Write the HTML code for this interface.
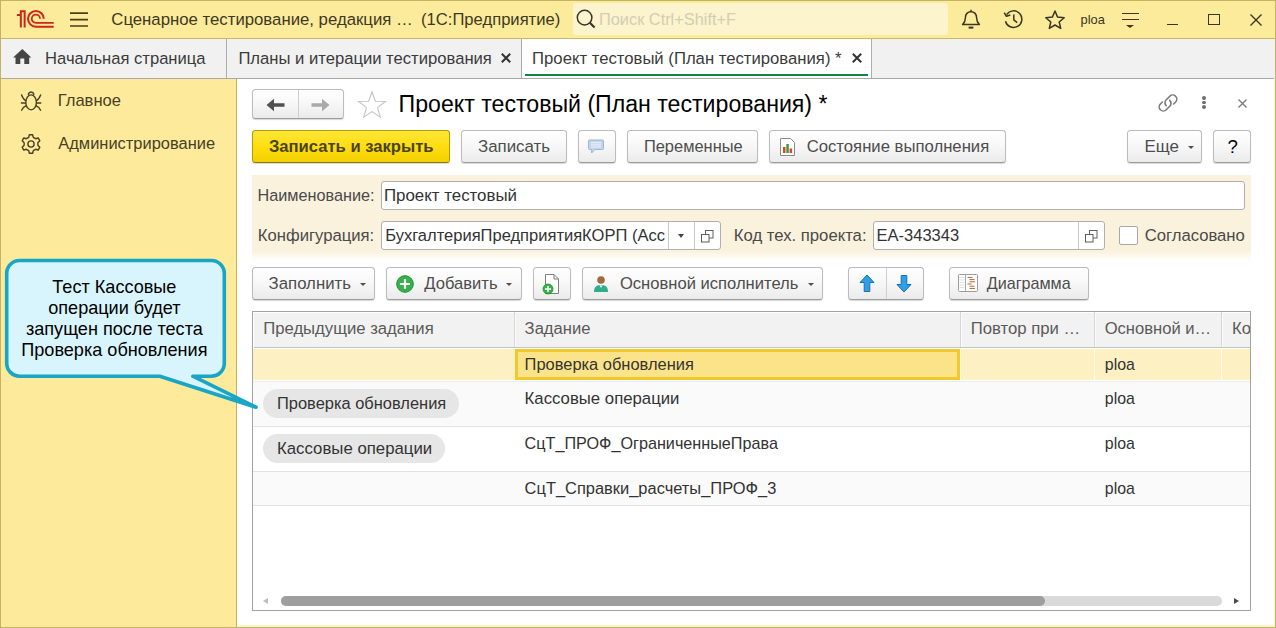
<!DOCTYPE html>
<html><head><meta charset="utf-8">
<style>
*{box-sizing:border-box;margin:0;padding:0}
html,body{width:1276px;height:628px;overflow:hidden;background:#fff}
body{font-family:"Liberation Sans",sans-serif;font-size:16px;color:#3b3b3b;position:relative}
.abs{position:absolute}
#titlebar{left:0;top:0;width:1276px;height:39px;background:#fbeb9b;border-bottom:1px solid #c9b964}
#tabbar{left:0;top:39px;width:1276px;height:40px;background:#f1f1f1;border-bottom:1px solid #a8a8a8}
#sidebar{left:0;top:79px;width:237px;height:549px;background:#fdeb9b;border-right:1px solid #c2b060}
.t{position:absolute;white-space:nowrap;line-height:20px}
.btn{position:absolute;height:33px;border:1px solid #bcbcbc;border-bottom-color:#9c9c9c;border-radius:3.500px;background:linear-gradient(#ffffff,#f7f7f7 50%,#ebebeb);box-shadow:0 1px 1px rgba(0,0,0,.16);font-size:16px;color:#4d4d4d}
.btn .t{top:6px}
.inp{position:absolute;height:29px;border:1px solid #b0b0b0;border-radius:3px;background:#fff}
.inp .t{top:5px;color:#333}
.car{position:absolute;width:0;height:0;border-left:3.200px solid transparent;border-right:3.200px solid transparent;border-top:3.400px solid #4f4f4f}
svg{position:absolute;overflow:visible}
</style></head><body>
<!-- TITLEBAR -->
<div id="titlebar" class="abs">
<!-- 1C logo -->
<svg style="left:17px;top:10px" width="37" height="18" viewBox="0 0 37 18" fill="none" stroke="#cf2518">
<path d="M0 5.100 H3.850 M3.850 17.600 V1.150 H7.650 V17.600" stroke-width="2"/>
<path d="M26.800 8.800 A7.900 7.900 0 1 0 18.900 16.700 H36.700" stroke-width="2"/>
<path d="M23.050 8.800 A4.150 4.150 0 1 0 18.900 12.950 H36.700" stroke-width="1.800"/>
</svg>
<!-- hamburger -->
<svg style="left:70px;top:10px" width="18" height="20" viewBox="0 0 18 20" stroke="#4a3f14" stroke-width="1.700"><path d="M0 3.200 H18 M0 9.600 H18 M0 16 H18"/></svg>
<div id="t0" class="t" style="left:111.3px;top:10px;font-size:16.76px;color:#40391f">Сценарное тестирование, редакция …</div>
<div id="t1" class="t" style="left:421.1px;top:10px;font-size:16.60px;color:#40391f">(1С:Предприятие)</div>
<!-- search -->
<div class="abs" style="left:573px;top:3px;width:375px;height:32px;background:#fcf4cd;border-radius:3px"></div>
<svg style="left:575.700px;top:9.300px" width="20" height="20" viewBox="0 0 20 20" fill="none" stroke="#3a3626" stroke-width="1.500"><circle cx="8.600" cy="8.600" r="7.300"/><path d="M13.800 13.800 L18.600 18.600" stroke-width="2.100"/></svg>
<div id="t2" class="t" style="left:599.0px;top:9px;font-size:16.35px;color:#d3cdb4">Поиск Ctrl+Shift+F</div>
<!-- bell -->
<svg style="left:961px;top:9px" width="20" height="21" viewBox="0 0 20 21" fill="none" stroke="#3a3626" stroke-width="1.5"><path d="M1.6 15.6 H18.4 C16 13.2 15.6 11.6 15.6 8.8 C15.6 5 13.4 2.8 10 2.8 C6.6 2.8 4.400 5 4.400 8.800 C4.400 11.600 4 13.200 1.600 15.600 Z" stroke-linejoin="round"/><path d="M7.6 18.6 H12.4" stroke-width="2"/><path d="M10 0.8 V2.8"/></svg>
<!-- history -->
<svg style="left:1003px;top:9px" width="21" height="21" viewBox="0 0 21 21" fill="none" stroke="#3a3626" stroke-width="1.5"><path d="M3.6 5.6 A8.3 8.3 0 1 1 2.5 12.2"/><path d="M1.2 3.6 L3.4 7.3 L7.300 6" stroke-linejoin="round"/><path d="M10.8 5.4 V10.8 L14.200 13.600"/></svg>
<!-- star -->
<svg style="left:1044px;top:8.500px" width="22" height="22" viewBox="0 0 22 22" fill="none" stroke="#3a3626" stroke-width="1.5" stroke-linejoin="round"><path d="M11 2 L13.6 8.1 L20.2 8.7 L15.2 13 L16.700 19.400 L11 16 L5.300 19.400 L6.800 13 L1.800 8.700 L8.400 8.100 Z"/></svg>
<div id="t3" class="t" style="left:1080.6px;top:10px;font-size:12.86px;color:#3a3626">ploa</div>
<!-- filter lines -->
<div class="abs" style="left:1121.500px;top:12.500px;width:17.500px;height:1.500px;background:#3a3626"></div>
<div class="abs" style="left:1121.500px;top:18.500px;width:17.500px;height:1.500px;background:#3a3626"></div>
<div class="car" style="left:1126.200px;top:24.800px;border-top-color:#3a3626;border-left-width:4px;border-right-width:4px;border-top-width:3.600px"></div>
<!-- window controls -->
<div class="abs" style="left:1167px;top:23.600px;width:11px;height:1.300px;background:#3a3626"></div>
<div class="abs" style="left:1208.400px;top:14.300px;width:11.400px;height:10.800px;border:1.300px solid #3a3626"></div>
<svg style="left:1250px;top:13.600px" width="12" height="12" viewBox="0 0 12 12" stroke="#3a3626" stroke-width="1.400"><path d="M0.500 0.500 L11.500 11.500 M11.500 0.500 L0.500 11.500"/></svg>
</div>
<!-- TABBAR -->
<div id="tabbar" class="abs">
<svg style="left:13px;top:10px" width="20" height="18" viewBox="0 0 20 18" fill="#454545"><path d="M9.3 0.1 L0.1 8.6 H2.5 V14.9 H7.3 V9.6 H11.3 V14.9 H16.2 V8.6 H18.3 Z"/></svg>
<div id="t4" class="t" style="left:45.1px;top:10px;font-size:16.58px">Начальная страница</div>
<div class="abs" style="left:226px;top:0;width:1px;height:39px;background:#adadad"></div>
<div id="t5" class="t" style="left:238.4px;top:10px;font-size:16.64px">Планы и итерации тестирования</div>
<svg style="left:501px;top:14px" width="10" height="10" viewBox="0 0 10 10" stroke="#333" stroke-width="2"><path d="M0.8 0.8 L9.2 9.2 M9.2 0.8 L0.8 9.2"/></svg>
<div class="abs" style="left:521px;top:0;width:1px;height:39px;background:#adadad"></div>
<div class="abs" style="left:522px;top:0;width:349px;height:39px;background:#fff"></div>
<div class="abs" style="left:524.500px;top:35px;width:343px;height:2px;background:#0c8844"></div>
<div id="t6" class="t" style="left:532.1px;top:10px;font-size:16.69px">Проект тестовый (План тестирования) *</div>
<svg style="left:852px;top:14px" width="10" height="10" viewBox="0 0 10 10" stroke="#333" stroke-width="2"><path d="M0.8 0.8 L9.2 9.2 M9.2 0.8 L0.8 9.2"/></svg>
<div class="abs" style="left:871px;top:0;width:1px;height:39px;background:#adadad"></div>
</div>
<!-- SIDEBAR -->
<div id="sidebar" class="abs">
<!-- bug -->
<svg style="left:19px;top:10px" width="24" height="24" viewBox="0 0 24 24" fill="none" stroke="#474026" stroke-width="1.400" stroke-linecap="round"><ellipse cx="12.100" cy="13.400" rx="5.300" ry="7.500"/><path d="M9.300 5.200 A2.900 2.900 0 0 1 14.900 5.200"/><path d="M6.800 11.600 C5 10.800 3.600 8.800 2.600 6 M17.400 11.600 C19.200 10.800 20.600 8.800 21.600 6 M6.600 14 H2.400 M17.600 14 H21.800 M6.900 16.800 C5 17.600 3.600 19 2.600 21.200 M17.300 16.800 C19.200 17.600 20.600 19 21.600 21.200"/></svg>
<div id="t7" class="t" style="left:57.7px;top:12px;font-size:16.57px;color:#474026">Главное</div>
<!-- gear -->
<svg style="left:19px;top:52.800px" width="24" height="24" viewBox="0 0 24 24" fill="none" stroke="#474026" stroke-width="1.400" stroke-linejoin="round"><circle cx="12" cy="12" r="3.100"/><path d="M14.28 5.38 L13.63 2.74 L10.37 2.74 L9.72 5.38 L7.41 6.72 L4.80 5.96 L3.17 8.79 L5.13 10.66 L5.13 13.34 L3.17 15.21 L4.80 18.04 L7.41 17.28 L9.72 18.62 L10.37 21.26 L13.63 21.26 L14.28 18.62 L16.59 17.28 L19.20 18.04 L20.83 15.21 L18.87 13.34 L18.87 10.66 L20.83 8.79 L19.20 5.96 L16.59 6.72 Z"/></svg>
<div id="t8" class="t" style="left:58.3px;top:54px;font-size:16.46px;color:#474026">Администрирование</div>
</div>
<!-- CONTENT -->
<div id="content">
<!-- nav buttons -->
<div class="btn" style="left:252px;top:89px;width:92px;height:30px"></div>
<div class="abs" style="left:298px;top:90px;width:1px;height:28px;background:#cfcfcf"></div>
<svg style="left:266px;top:97.500px" width="19" height="14" viewBox="0 0 19 14" fill="#505050"><path d="M0.5 7 L8 0.8 V5.2 H18.5 V8.8 H8 V13.2 Z"/></svg>
<svg style="left:311px;top:97.500px" width="19" height="14" viewBox="0 0 19 14" fill="#a9a9a9"><path d="M18.5 7 L11 0.8 V5.2 H0.5 V8.8 H11 V13.2 Z"/></svg>
<!-- star -->
<svg style="left:357.300px;top:89.600px" width="30" height="30" viewBox="0 0 30 30" fill="none" stroke="#c6c6c6" stroke-width="1.150" stroke-linejoin="miter"><path d="M15 2 L18.4 11.2 L28.4 11.5 L20.5 17.6 L23.3 27.2 L15 21.6 L6.7 27.2 L9.5 17.6 L1.6 11.5 L11.6 11.2 Z"/></svg>
<div id="t9" class="t" style="left:398.6px;top:90px;font-size:23.14px;line-height:28px;color:#000">Проект тестовый (План тестирования) *</div>
<!-- link -->
<svg style="left:1156px;top:91px" width="24" height="24" viewBox="0 0 24 24" fill="none" stroke="#7a7a7a" stroke-width="1.6" stroke-linecap="round"><path d="M10.200 14.600 A4.100 4.100 0 0 1 10.200 8.800 L13.800 5.200 A4.100 4.100 0 0 1 19.600 11 L17.600 13"/><path d="M13.800 9.400 A4.100 4.100 0 0 1 13.800 15.200 L10.200 18.800 A4.100 4.100 0 0 1 4.400 13 L6.400 11"/></svg>
<div class="abs" style="left:1202.200px;top:96.200px;width:3.600px;height:3.600px;border-radius:2px;background:#6e6e6e"></div>
<div class="abs" style="left:1202.200px;top:100.700px;width:3.600px;height:3.600px;border-radius:2px;background:#6e6e6e"></div>
<div class="abs" style="left:1202.200px;top:105.200px;width:3.600px;height:3.600px;border-radius:2px;background:#6e6e6e"></div>
<svg style="left:1238px;top:98.500px" width="9" height="9" viewBox="0 0 9 9" stroke="#7a7a7a" stroke-width="1.300"><path d="M0.500 0.500 L8.500 8.500 M8.500 0.500 L0.500 8.500"/></svg>
<!-- command bar -->
<div class="btn" style="left:252px;top:130px;width:198px;background:linear-gradient(#ffe736,#ffdd10 50%,#f3d000);border-color:#b39a00;border-bottom-color:#8f7a00"><div id="t10" class="t" style="left:15.9px;font-weight:bold;color:#494320;font-size:16.61px">Записать и закрыть</div></div>
<div class="btn" style="left:461px;top:130px;width:106px"><div id="t11" class="t" style="left:16px;font-size:16.86px">Записать</div></div>
<div class="btn" style="left:578px;top:130px;width:38px"></div>
<svg style="left:588px;top:139px" width="17" height="16" viewBox="0 0 17 16"><path d="M1.500 1 H14.500 Q15.500 1 15.500 2 V9.500 Q15.500 10.500 14.500 10.500 H7 L3.600 14 V10.500 H1.500 Q0.500 10.500 0.500 9.500 V2 Q0.500 1 1.500 1 Z" fill="#c3d5e8" stroke="#9db6d0" stroke-width="1"/><path d="M3 3.800 H13 M3 5.900 H13 M3 8 H13" stroke="#eef4fa" stroke-width="1"/></svg>
<div class="btn" style="left:627px;top:130px;width:131px"><div id="t12" class="t" style="top:5px;left:15.9px;font-size:16.45px">Переменные</div></div>
<div class="btn" style="left:769px;top:130px;width:237px"><div id="t13" class="t" style="left:36.7px;font-size:16.71px">Состояние выполнения</div></div>
<svg style="left:780px;top:138px" width="15" height="18" viewBox="0 0 15 18"><path d="M0.5 0.5 H10.5 L14.5 4.5 V17.5 H0.5 Z" fill="#fff" stroke="#8c8c8c"/><rect x="3" y="9" width="2.5" height="6" fill="#d9442e"/><rect x="6.3" y="6" width="2.5" height="9" fill="#3d9a3d"/><rect x="9.6" y="10.5" width="2.5" height="4.5" fill="#d9442e"/></svg>
<div class="btn" style="left:1127px;top:130px;width:75px"><div id="t14" class="t" style="left:16.5px;font-size:16.90px">Еще</div><div class="car" style="left:59.500px;top:15px"></div></div>
<div class="btn" style="left:1213px;top:130px;width:38px"><div id="t15" class="t" style="left:13.4px;font-size:18.6px;color:#000;top:6px">?</div></div>
<!-- beige panel -->
<div class="abs" style="left:252px;top:175px;width:999px;height:86px;background:linear-gradient(#faf2dd 0,#faf2dd 76px,#fff 86px)"></div>
<div id="t16" class="t" style="left:257.4px;top:185px;font-size:16.25px;color:#4a4a4a">Наименование:</div>
<div class="inp" style="left:381px;top:181px;width:864px"><div id="t17" class="t" style="top:4px;left:2.0px;font-size:16.87px">Проект тестовый</div></div>
<div id="t18" class="t" style="left:257.8px;top:226px;font-size:16.66px;color:#4a4a4a">Конфигурация:</div>
<div class="inp" style="left:381px;top:221px;width:340px"><div id="t19" class="t" style="top:4px;left:3.2px;font-size:16.52px">БухгалтерияПредприятияКОРП (Acc</div>
<div class="abs" style="left:286px;top:0;width:1px;height:27px;background:#c8c8c8"></div><div class="car" style="left:295.500px;top:12px;border-left-width:3.700px;border-right-width:3.700px;border-top-width:4px;border-top-color:#444"></div>
<div class="abs" style="left:312px;top:0;width:1px;height:27px;background:#c8c8c8"></div>
<svg style="left:319px;top:7.500px" width="13" height="13" viewBox="0 0 13 13" fill="#fff" stroke="#5e5e5e" stroke-width="1"><rect x="4.500" y="0.500" width="7.500" height="7.500"/><rect x="0.500" y="4.500" width="7.500" height="7.500"/></svg></div>
<div id="t20" class="t" style="left:733.8px;top:226px;font-size:16.72px;color:#4a4a4a">Код тех. проекта:</div>
<div class="inp" style="left:873px;top:221px;width:232px"><div id="t21" class="t" style="top:3px;left:2.6px;font-size:16.49px">EA-343343</div>
<div class="abs" style="left:204px;top:0;width:1px;height:27px;background:#c8c8c8"></div>
<svg style="left:211px;top:7.500px" width="13" height="13" viewBox="0 0 13 13" fill="#fff" stroke="#5e5e5e" stroke-width="1"><rect x="4.500" y="0.500" width="7.500" height="7.500"/><rect x="0.500" y="4.500" width="7.500" height="7.500"/></svg></div>
<div class="abs" style="left:1119px;top:226px;width:19px;height:19px;border:1px solid #a8a8a8;border-radius:2px;background:#fff"></div>
<div id="t22" class="t" style="left:1144.7px;top:226px;font-size:16.67px;color:#4a4a4a">Согласовано</div>
<!-- table toolbar -->
<div class="btn" style="left:252px;top:267px;width:123px"><div id="t23" class="t" style="left:15.6px;font-size:16.80px">Заполнить</div><div class="car" style="left:107px;top:15px"></div></div>
<div class="btn" style="left:386px;top:267px;width:136px"><div id="t24" class="t" style="left:37.3px;font-size:16.58px">Добавить</div><div class="car" style="left:119px;top:15px"></div></div>
<svg style="left:396px;top:275px" width="18" height="18" viewBox="0 0 18 18"><circle cx="9" cy="9" r="8.3" fill="#35b24a" stroke="#1e8f34" stroke-width="1"/><path d="M9 4 V14 M4 9 H14" stroke="#fff" stroke-width="2.2"/></svg>
<div class="btn" style="left:533px;top:267px;width:38px"></div>
<svg style="left:542px;top:273px" width="18" height="22" viewBox="0 0 18 22"><path d="M3.5 1.5 H12 L16.5 6 V20.5 H3.5 Z" fill="#fff" stroke="#7f7f7f"/><path d="M12 1.5 V6 H16.5" fill="none" stroke="#7f7f7f"/><circle cx="6" cy="16" r="5" fill="#35b24a" stroke="#1e8f34" stroke-width="0.8"/><path d="M6 13 V19 M3 16 H9" stroke="#fff" stroke-width="1.5"/></svg>
<div class="btn" style="left:582px;top:267px;width:241px"><div id="t25" class="t" style="left:36.9px;font-size:16.58px">Основной исполнитель</div><div class="car" style="left:225px;top:15px"></div></div>
<svg style="left:593px;top:275px" width="16" height="18" viewBox="0 0 16 18"><circle cx="8" cy="5" r="3.8" fill="#a06a3c"/><path d="M1 17 C1 11.5 4 10 8 10 C12 10 15 11.5 15 17 Z" fill="#2fae8c"/><path d="M6.3 10.2 L8 13 L9.7 10.2 Z" fill="#e8f6f0"/></svg>
<div class="btn" style="left:848px;top:267px;width:76px"></div>
<div class="abs" style="left:886px;top:268px;width:1px;height:31px;background:#cfcfcf"></div>
<svg style="left:859px;top:274px" width="16" height="19" viewBox="0 0 16 19"><path d="M8 1 L15 8.5 H10.8 V17.5 H5.2 V8.5 H1 Z" fill="#2f9fe6" stroke="#1a6fb5" stroke-width="1" stroke-linejoin="round"/></svg>
<svg style="left:896px;top:274px" width="16" height="19" viewBox="0 0 16 19"><path d="M8 18 L15 10.5 H10.8 V1.5 H5.2 V10.5 H1 Z" fill="#2f9fe6" stroke="#1a6fb5" stroke-width="1" stroke-linejoin="round"/></svg>
<div class="btn" style="left:949px;top:267px;width:140px"><div id="t26" class="t" style="top:5px;left:36.7px;font-size:16.17px">Диаграмма</div></div>
<svg style="left:958px;top:274px" width="20" height="18" viewBox="0 0 20 18"><rect x="0.500" y="0.500" width="19" height="17" rx="1" fill="#fff" stroke="#9c9c9c"/><path d="M7.500 0.500 V17.500" stroke="#a8a8a8"/><path d="M1.500 3.500 H6.500 M1.500 6 H6.500 M1.500 8.500 H6.500 M1.500 11 H6.500 M1.500 13.500 H6.500" stroke="#dedede" stroke-width="0.900"/><path d="M9.500 3.400 H14.500 M11.500 5.600 H16.500 M11.500 7.800 H17 M9.500 10 H13.500 M11.500 12.200 H16.500 M11.500 14.400 H17" stroke="#a5683a" stroke-width="1"/></svg>
</div>
<!-- TABLE -->
<div id="table">
<div class="abs" style="left:252px;top:311px;width:999px;height:300px;border:1px solid #a3a3a3;background:#fff"></div>
<div class="abs" style="left:254px;top:313px;width:996px;height:35px;background:#f2f2f2;border-bottom:1px solid #c4c4c4"></div>
<div class="abs" style="left:514px;top:312px;width:1px;height:35px;background:#d6d6d6;box-shadow:1px 0 0 #fbfbfb"></div>
<div class="abs" style="left:960px;top:312px;width:1px;height:35px;background:#d6d6d6;box-shadow:1px 0 0 #fbfbfb"></div>
<div class="abs" style="left:1094px;top:312px;width:1px;height:35px;background:#d6d6d6;box-shadow:1px 0 0 #fbfbfb"></div>
<div class="abs" style="left:1221px;top:312px;width:1px;height:35px;background:#d6d6d6;box-shadow:1px 0 0 #fbfbfb"></div>
<div id="t27" class="t" style="left:263.2px;top:319px;font-size:16.70px;color:#5a5a5a">Предыдущие задания</div>
<div id="t28" class="t" style="left:524.6px;top:319px;font-size:16.62px;color:#5a5a5a">Задание</div>
<div id="t29" class="t" style="left:970.7px;top:319px;font-size:16.73px;color:#5a5a5a">Повтор при …</div>
<div id="t30" class="t" style="left:1104.7px;top:319px;font-size:16.59px;color:#5a5a5a">Основной и…</div>
<div id="t31" class="t" style="left:1232px;top:319px;font-size:16.65px;color:#5a5a5a;width:18px;overflow:hidden">Ко</div>
<!-- row1 -->
<div class="abs" style="left:253px;top:349px;width:997px;height:31px;background:#fdf0c3"></div>
<div class="abs" style="left:960px;top:349px;width:1px;height:31px;background:#fffaea"></div>
<div class="abs" style="left:1094px;top:349px;width:1px;height:31px;background:#fffaea"></div>
<div class="abs" style="left:1221px;top:349px;width:1px;height:31px;background:#fffaea"></div>
<div class="abs" style="left:515px;top:349px;width:445px;height:31px;background:#fbe38a;border:3px solid #f0c92e"></div>
<div id="t32" class="t" style="left:524.6px;top:354px;font-size:16.45px;color:#333">Проверка обновления</div>
<div id="t33" class="t" style="left:1104.8px;top:355px;font-size:15.90px;color:#333">ploa</div>
<!-- row2 -->
<div class="abs" style="left:253px;top:381px;width:997px;height:46px;background:#fafafa;border-top:1px solid #ececec;border-bottom:1px solid #e3e3e3"></div>
<div class="abs" style="left:263px;top:389px;width:196px;height:29px;border-radius:15px;background:#e6e6e6"></div>
<div id="t34" class="t" style="left:277px;top:393px;font-size:16.47px;color:#333">Проверка обновления</div>
<div id="t35" class="t" style="left:524.6px;top:389px;font-size:16.76px;color:#333">Кассовые операции</div>
<div id="t36" class="t" style="left:1104.8px;top:389px;font-size:15.90px;color:#333">ploa</div>
<!-- row3 -->
<div class="abs" style="left:253px;top:427px;width:997px;height:45px;background:#fff;border-bottom:1px solid #e3e3e3"></div>
<div class="abs" style="left:263px;top:434px;width:182px;height:29px;border-radius:15px;background:#e6e6e6"></div>
<div id="t37" class="t" style="left:277px;top:439px;font-size:16.80px;color:#333">Кассовые операции</div>
<div id="t38" class="t" style="left:524.6px;top:433px;font-size:16.19px;color:#333">СцТ_ПРОФ_ОграниченныеПрава</div>
<div id="t39" class="t" style="left:1104.8px;top:434px;font-size:15.90px;color:#333">ploa</div>
<!-- row4 -->
<div class="abs" style="left:253px;top:472px;width:997px;height:34px;background:#fafafa;border-bottom:1px solid #e3e3e3"></div>
<div id="t40" class="t" style="left:524.6px;top:478px;font-size:16.44px;color:#333">СцТ_Справки_расчеты_ПРОФ_3</div>
<div id="t41" class="t" style="left:1104.8px;top:479px;font-size:15.90px;color:#333">ploa</div>
<!-- scrollbar -->
<div class="abs" style="left:281px;top:596px;width:941px;height:10px;border-radius:5px;background:#dadada"></div>
<div class="abs" style="left:281px;top:596px;width:764px;height:10px;border-radius:5px;background:#9e9e9e"></div>
<div class="abs" style="left:263px;top:598px;width:0;height:0;border-top:3.5px solid transparent;border-bottom:3.5px solid transparent;border-right:5px solid #bdbdbd"></div>
<div class="abs" style="left:1234px;top:598px;width:0;height:0;border-top:3.5px solid transparent;border-bottom:3.5px solid transparent;border-left:5px solid #4a4a4a"></div>
</div>
<!-- window frame edges -->
<div class="abs" style="left:1273.500px;top:78px;width:1.500px;height:550px;background:#fcf5c6"></div>
<div class="abs" style="left:238px;top:624.600px;width:1038px;height:2px;background:#fcf5c6"></div>
<div class="abs" style="left:1275px;top:0;width:1px;height:628px;background:#c4b363"></div>
<div class="abs" style="left:0;top:626.500px;width:1276px;height:1.500px;background:#c4b363"></div>
<div class="abs" style="left:0;top:0;width:1px;height:628px;background:#c4b363"></div>
<div class="abs" style="left:0;top:0;width:1276px;height:1px;background:#c4b363"></div>
<!-- CALLOUT -->
<svg style="left:0;top:255px" width="270" height="160" viewBox="0 0 270 160">
<path d="M6.700 18.500 A13 13 0 0 1 19.700 5.500 H211.300 A13 13 0 0 1 224.300 18.500 V108.200 A13 13 0 0 1 211.300 121.200 H192.800 L256 152.200 L159.800 121.200 H19.700 A13 13 0 0 1 6.700 108.200 Z" fill="#d8f5fd" stroke="#18a5c6" stroke-width="3.600" stroke-linejoin="round"/>
</svg>
<div class="abs" style="left:4.400px;top:277px;width:220px;text-align:center;font-size:18.100px;line-height:21px;color:#000">Тест Кассовые<br>операции будет<br>запущен после теста<br>Проверка обновления</div>
</body></html>
